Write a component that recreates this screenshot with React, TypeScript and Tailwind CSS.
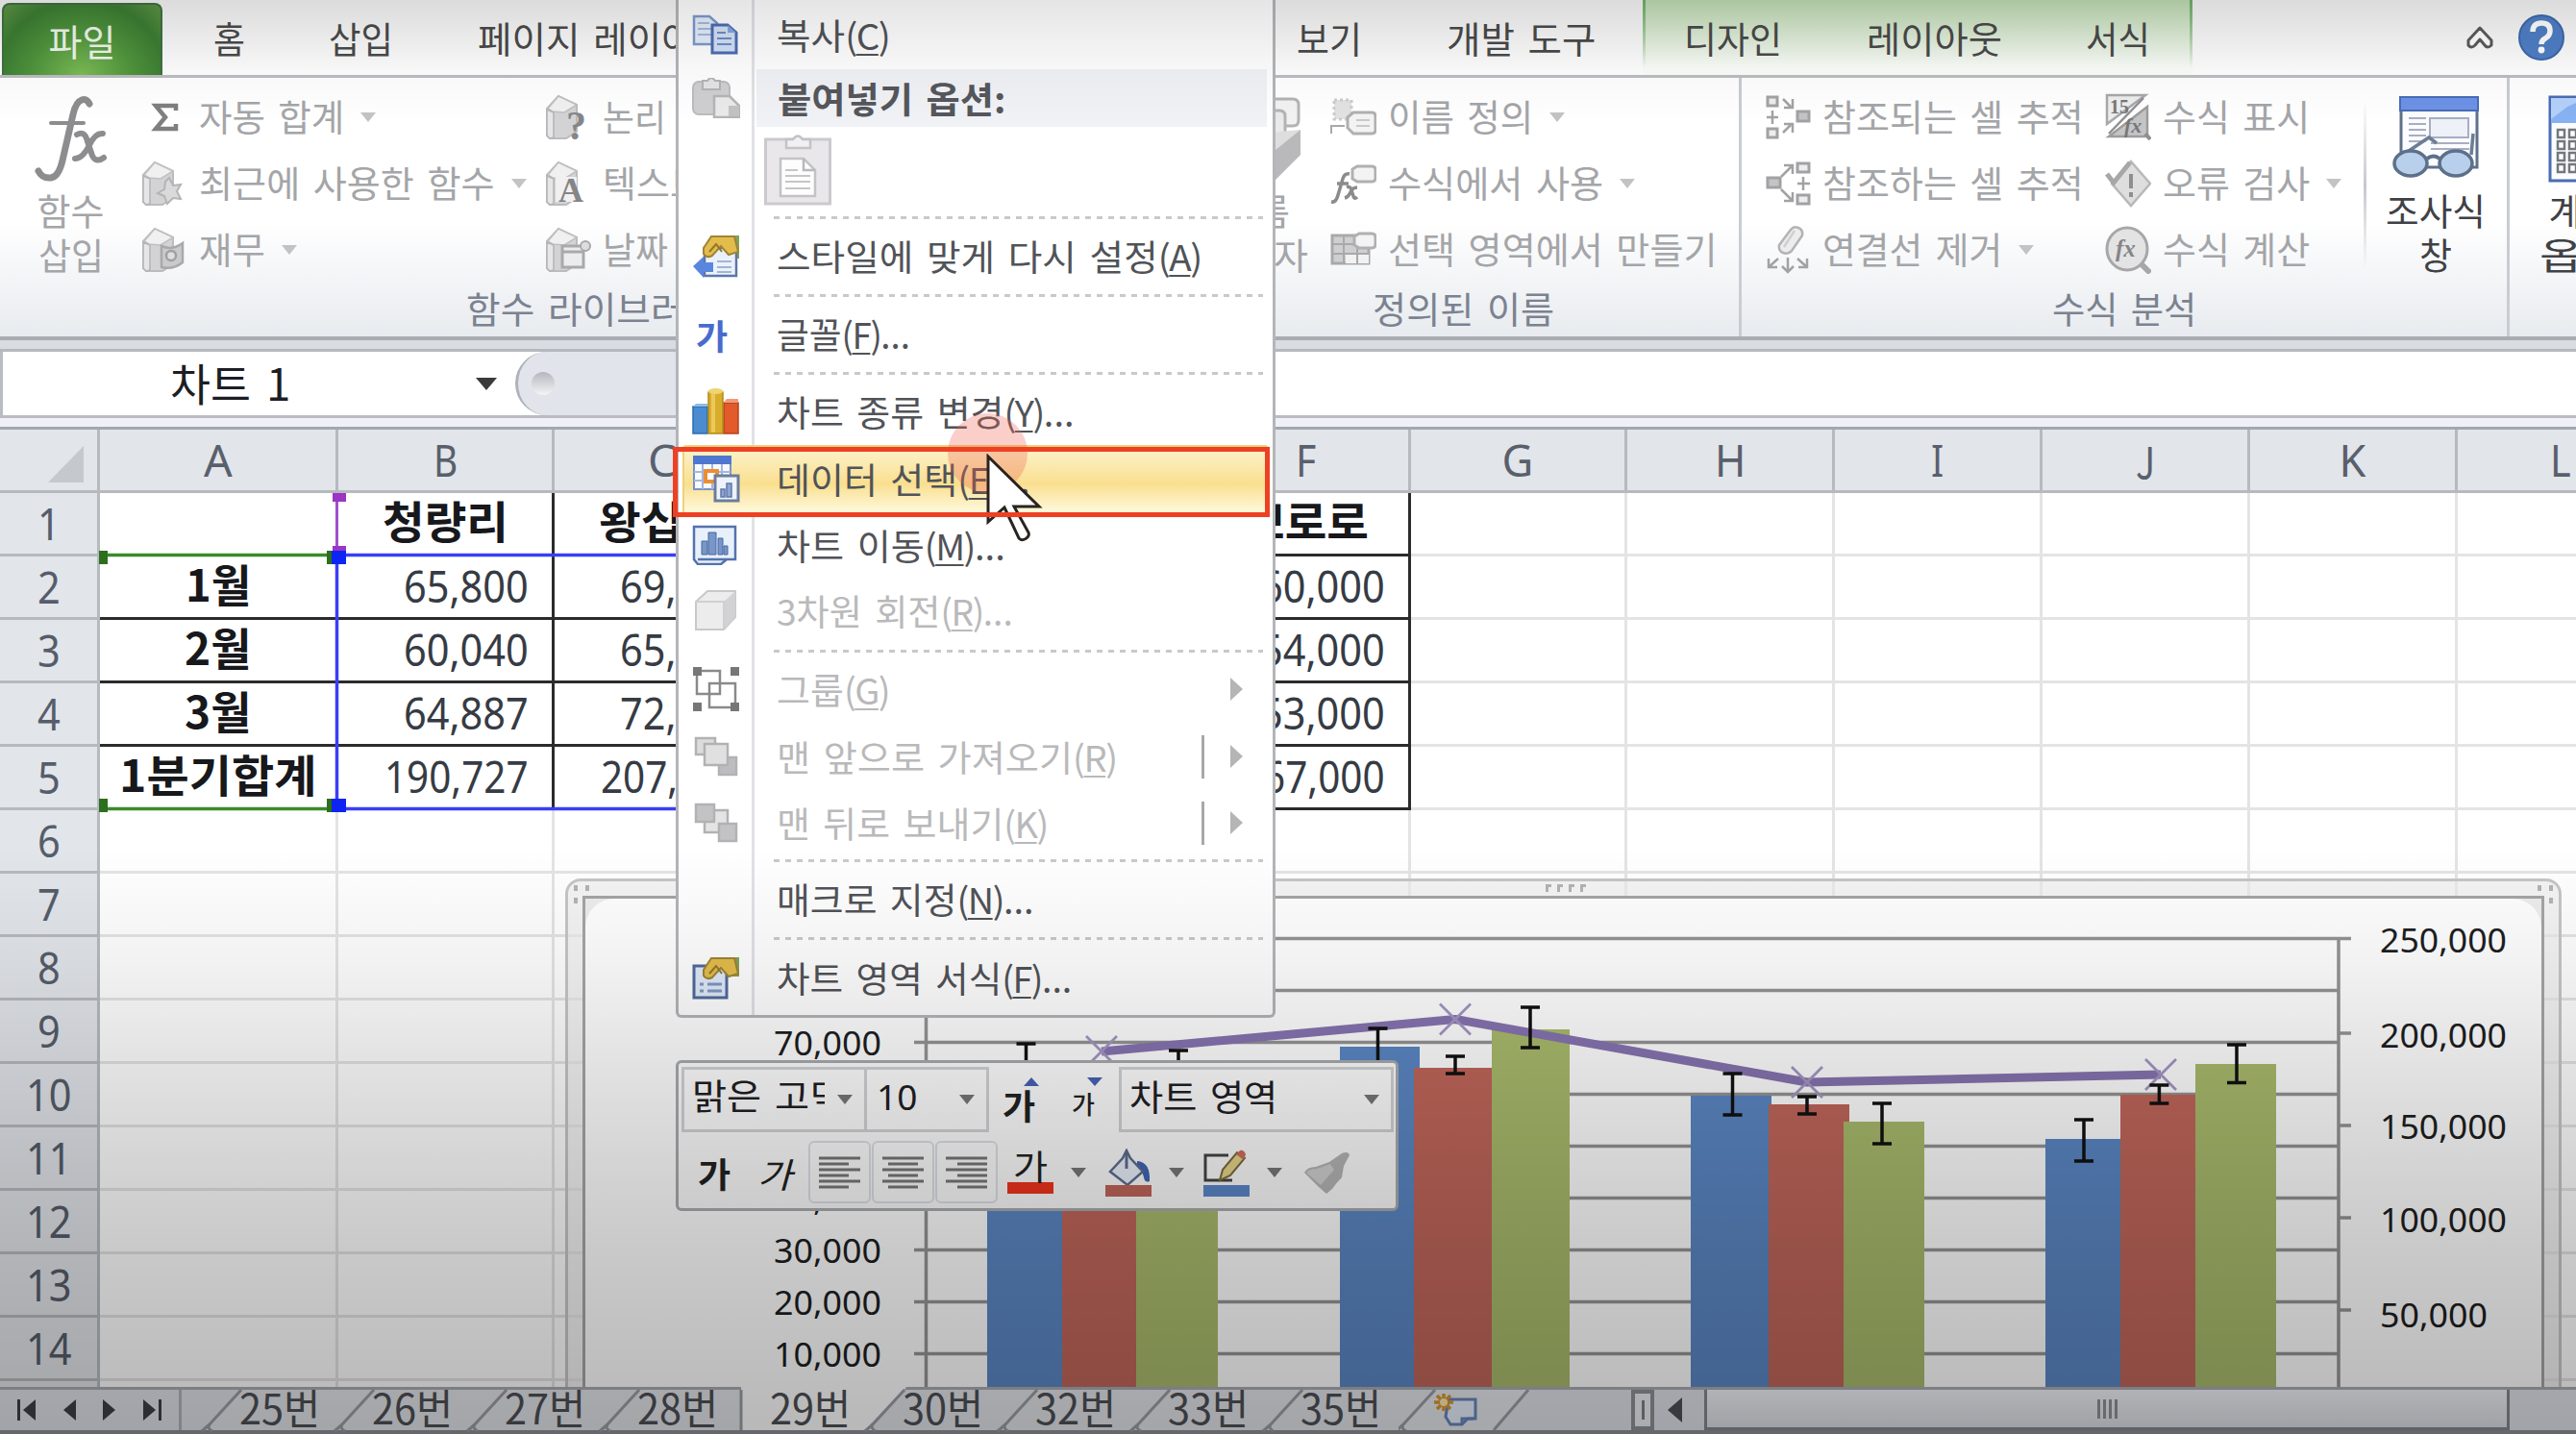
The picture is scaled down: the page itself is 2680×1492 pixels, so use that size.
import { useLayoutEffect, useRef, useState, type ReactNode } from "react";

const KR = "font-['Noto_Sans_CJK_KR',sans-serif]";
const LATIN = "font-['Noto_Sans','Noto_Sans_CJK_KR',sans-serif]";

/* Text squeezed or stretched horizontally so that it is exactly `w` pixels wide. */
function Fit({ w, className = "", children }: { w: number; className?: string; children: ReactNode }) {
  const ref = useRef<HTMLSpanElement>(null);
  const [scale, setScale] = useState(1);
  useLayoutEffect(() => {
    if (ref.current) setScale(w / ref.current.offsetWidth);
  }, [w]);
  return (
    <span className={`inline-block shrink-0 leading-none whitespace-nowrap [word-spacing:0.13em] ${className}`} style={{ width: w }}>
      <span ref={ref} className="inline-block origin-left" style={{ transform: `scaleX(${scale})` }}>
        {children}
      </span>
    </span>
  );
}

function Arrow({ className }: { className: string }) {
  return (
    <svg viewBox="0 0 16 10" className={`h-2.5 w-4 shrink-0 ${className}`}>
      <path d="M0 0h16l-8 10z" fill="currentColor" />
    </svg>
  );
}

/* ---------- ribbon icons ---------- */

function Book({ children }: { children?: ReactNode }) {
  return (
    <svg viewBox="0 0 48 48" className="h-12 w-12">
      <path d="M2 15 14 2l19 9v28l-11 7H5l-3-3z" fill="#d3d3d5" stroke="#bcbcbe" strokeWidth="2" />
      <path d="M3 15 14 2l19 9-13 8-12-1z" fill="#f0f0f0" stroke="#c0c0c2" strokeWidth="1.500" />
      <path d="M2 16l7 3v26l-4 1-3-3z" fill="#e6e6e7" stroke="#b4b4b6" strokeWidth="1.500" />
      {children}
    </svg>
  );
}

function TagIcon() {
  return (
    <svg viewBox="0 0 48 48" className="h-12 w-12">
      <path d="M4 6h18v20H4z" fill="#e2e2e3" />
      <path d="M4 6h18v20H4z" fill="none" stroke="#cdcdcf" strokeWidth="3" strokeDasharray="3 3" />
      <path d="M1 41v-8h14" fill="none" stroke="#a9a9ab" strokeWidth="2" />
      <path d="M24 19h19q4 0 4 4v14q0 4-4 4H24l-6-6V24z" fill="#f3f3f3" stroke="#b0b0b2" strokeWidth="3" />
      <path d="M27 27h14M27 33h14" stroke="#c9c9cb" strokeWidth="2" />
    </svg>
  );
}

function FxTagIcon() {
  return (
    <svg viewBox="0 0 48 48" className="h-12 w-12">
      <path d="M28 6h15q4 0 4 4v8q0 4-4 4H28l-5-3V9z" fill="#f3f3f3" stroke="#b0b0b2" strokeWidth="3" />
      <path d="M1 43q5 1 7-7l5-17q2-6 7-5M7 24h12M17 28q4-2 5 3l2 6q1 4 4 1M28 28q-5 0-7 5t-6 6" fill="none" stroke="#8b8b8d" strokeWidth="3.500" />
    </svg>
  );
}

function GridTagIcon() {
  return (
    <svg viewBox="0 0 48 48" className="h-12 w-12">
      <path d="M2 9h38v29H2z" fill="#cfcfd1" stroke="#a9a9ab" strokeWidth="3" />
      <path d="M16 28h24v10H16z" fill="#f2f2f2" />
      <path d="M2 18h38M2 28h38M14 9v29M28 9v29" stroke="#a9a9ab" strokeWidth="2" />
      <path d="M30 7h13q4 0 4 4v7q0 4-4 4H30l-5-3v-9z" fill="#f3f3f3" stroke="#b0b0b2" strokeWidth="3" />
    </svg>
  );
}

function PrecedentsIcon() {
  return (
    <svg viewBox="0 0 48 48" className="h-12 w-12" fill="none" stroke="#a2a2a4" strokeWidth="3">
      <path d="M3 3h10v9H3zM3 36h10v9H3z" fill="#ededee" />
      <path d="M34 18h12v10H34z" fill="#c4c4c6" />
      <path d="M8 17v14M2 24h12M19 5l8 8M20 14h9V5M19 40l8-8M20 31h9v9" strokeWidth="2.5" />
    </svg>
  );
}

function DependentsIcon() {
  return (
    <svg viewBox="0 0 48 48" className="h-12 w-12" fill="none" stroke="#a2a2a4" strokeWidth="3">
      <path d="M34 3h12v9H34zM34 36h12v9H34z" fill="#ededee" />
      <path d="M3 18h13v10H3z" fill="#c4c4c6" />
      <path d="M40 17v14M34 24h13M17 17 28 6M20 5h9v9M17 30l11 11M20 42h9v-9" strokeWidth="2.5" />
    </svg>
  );
}

function EraserIcon() {
  return (
    <svg viewBox="0 0 48 50" className="h-[50px] w-12" fill="none" stroke="#a2a2a4" strokeWidth="2.5">
      <path d="M27 4q3-4 8-2t4 8L28 26q-4 4-9 2t-4-8z" fill="#ececed" stroke="#b3b3b5" />
      <path d="M31 5l-11 17" stroke="#cfcfd1" />
      <path d="M14 34 4 43M4 34v9h9M24 33v14M18 42l6 6 6-6M34 34l10 9M44 34v9h-9" />
    </svg>
  );
}

function ShowFormulaIcon() {
  return (
    <svg viewBox="0 0 48 50" className="h-[50px] w-12">
      <path d="M2 2h40L2 32z" fill="#ededee" stroke="#a8a8aa" strokeWidth="2.5" />
      <path d="M44 14v31H4z" fill="#c4c4c6" stroke="#9c9c9e" strokeWidth="2.5" />
      <text x="5" y="21" fontSize="20" fontWeight="700" fontFamily="Liberation Serif" fill="#777">15</text>
      <text x="20" y="41" fontSize="22" fontStyle="italic" fontWeight="700" fontFamily="Liberation Serif" fill="#777">fx</text>
      <path d="M4 42 40 5" stroke="#8f8f91" strokeWidth="2.5" />
      <path d="M42 42l5 6" stroke="#8f8f91" strokeWidth="4" />
    </svg>
  );
}

function ErrorCheckIcon() {
  return (
    <svg viewBox="0 0 48 50" className="h-[50px] w-12">
      <path d="M27 2 47 25 27 48 7 25z" fill="#dededf" stroke="#b8b8ba" strokeWidth="2.5" />
      <path d="M27 15v15M27 34v5" stroke="#8e8e90" strokeWidth="4" />
      <path d="M2 15l7 9L26 3" fill="none" stroke="#a7a7a9" strokeWidth="5" />
    </svg>
  );
}

function EvaluateIcon() {
  return (
    <svg viewBox="0 0 48 50" className="h-[50px] w-12">
      <path d="M36 38l9 9" stroke="#a7a7a9" strokeWidth="6" strokeLinecap="round" />
      <ellipse cx="23" cy="24" rx="21" ry="22" fill="#e3e3e4" stroke="#a7a7a9" strokeWidth="3" />
      <text x="11" y="32" fontSize="25" fontStyle="italic" fontWeight="700" fontFamily="Liberation Serif" fill="#858587">fx</text>
    </svg>
  );
}

function WatchIcon() {
  return (
    <svg viewBox="0 0 90 88" className="h-[88px] w-[90px]">
      <path d="M9 3h79v72H9z" fill="#fbfcfe" stroke="#5f7089" strokeWidth="3" />
      <path d="M8 2h81v14H8z" fill="#6c92e6" stroke="#4a6cb8" strokeWidth="2" />
      <path d="M17 24h18M17 30h18M17 36h18M17 42h18M17 48h18M40 50h40M40 56h40" stroke="#a7aec4" strokeWidth="2" />
      <path d="M39 24h40v20H39z" fill="#eef1f8" stroke="#a7aec4" strokeWidth="2" />
      <path d="M14 60 38 44l8 6M82 62l2-22" fill="none" stroke="#6c7d94" strokeWidth="3.500" />
      <ellipse cx="19" cy="71" rx="17" ry="13" fill="#b9d0ec" stroke="#5d7089" strokeWidth="3.500" />
      <ellipse cx="66" cy="71" rx="17" ry="13" fill="#b9d0ec" stroke="#5d7089" strokeWidth="3.500" />
      <path d="M36 66q7-5 13 0" fill="none" stroke="#5d7089" strokeWidth="4" />
    </svg>
  );
}

function CalcIcon() {
  return (
    <svg viewBox="0 0 72 92" className="h-[92px] w-[72px]">
      <path d="M2 2h68v87H2z" fill="#fafcff" stroke="#4a6db3" strokeWidth="3" />
      <path d="M3 3h66v26H3z" fill="#86b2f3" />
      <path d="M3 25 20 12l20-9H3z" fill="#b4d0fa" />
      {[36, 48, 60, 72].map((y) => (
        <g key={y} fill="#fff" stroke="#75777c" strokeWidth="2.5">
          <rect x="10" y={y} width="7" height="8" />
          <rect x="22" y={y} width="7" height="8" />
          <rect x="34" y={y} width="7" height="8" />
          <rect x="46" y={y} width="7" height="8" />
        </g>
      ))}
    </svg>
  );
}

function NameManagerIcon() {
  return (
    <svg viewBox="0 0 96 88" className="h-[88px] w-24">
      <path d="M40 4h46q6 0 6 6v16q0 6-6 6H40z" fill="#f2f2f3" stroke="#b3b3b5" strokeWidth="3" />
      <path d="M20 16h52q6 0 6 6v20H20z" fill="#eaeaeb" stroke="#b3b3b5" strokeWidth="3" />
      <path d="M4 44l90-8v26L68 88H4z" fill="#dededf" />
      <path d="M62 62 94 36v26L68 88h-6z" fill="#b9b9bb" />
    </svg>
  );
}

function Command({ icon, label, w, arrow }: { icon: ReactNode; label: string; w: number; arrow?: boolean }) {
  return (
    <div className="flex h-[69px] items-center">
      <div className="flex w-[60px] shrink-0 items-center">{icon}</div>
      <Fit w={w} className="-mt-1 text-[38px] text-[#a4a5a8]">{label}</Fit>
      {arrow && <Arrow className="ml-[17px] text-[#c3c3c5]" />}
    </div>
  );
}

function BigButton({ icon, top, bottom, tw, bw, className }: { icon: ReactNode; top: string; bottom: string; tw: number; bw: number; className: string }) {
  return (
    <div className={`flex shrink-0 flex-col items-center pt-3.5 ${className}`}>
      <div className="flex h-[100px] items-start pt-1">{icon}</div>
      <div className="flex h-[46px] items-center"><Fit w={tw} className="text-[38px]">{top}</Fit></div>
      <div className="flex h-[46px] items-center"><Fit w={bw} className="text-[38px]">{bottom}</Fit></div>
    </div>
  );
}

function Group({ label, w, className, children }: { label: string; w: number; className: string; children: ReactNode }) {
  return (
    <div className={`flex h-full shrink-0 flex-col border-r-[3px] border-[#c9ccd1] ${className}`}>
      <div className="flex h-[213px]">{children}</div>
      <div className="flex h-[52px] items-center justify-center">
        <Fit w={w} className="text-[38px] text-[#7b8290]">{label}</Fit>
      </div>
    </div>
  );
}

function Ribbon() {
  return (
    <div className="flex h-[273px] shrink-0 border-b-4 border-[#a9adb3] bg-linear-to-b from-white from-55% to-[#e8ebef]">
      <Group label="함수 라이브러리" w={263} className="w-[1236px]">
        <BigButton
          className="w-[147px] text-[#a4a5a8]"
          icon={
            <svg viewBox="0 0 76 90" className="h-[90px] w-[76px]" fill="none" stroke="#8d8d8f" strokeLinecap="round">
              <path d="M57 9q-3-6-8-4-6 2-9 15L29 68q-4 17-12 18-9 1-13-7" strokeWidth="7" />
              <path d="M17 29h34" strokeWidth="4" />
              <path d="M44 41q7-4 10 4l6 18q4 8 12 2M71 40q-8-1-14 12-7 14-15 14" strokeWidth="6" />
            </svg>
          }
          top="함수" bottom="삽입" tw={70} bw={68}
        />
        <div className="w-[420px] pt-1.5">
          <Command
            icon={<svg viewBox="0 0 48 48" className="h-12 w-12"><path d="M36 17v-5H15l10 12-10 12h21v-5" fill="none" stroke="#7f7f82" strokeWidth="4.500" /></svg>}
            label="자동 합계" w={151} arrow
          />
          <Command
            icon={<Book><path d="M29 18l4 8 8-1-4 7 4 8-8-1-6 6-3-8-7-3 7-4 1-8z" fill="#dadadb" stroke="#b4b4b6" strokeWidth="2" /></Book>}
            label="최근에 사용한 함수" w={308} arrow
          />
          <Command
            icon={<Book><path d="M21 20q11 5 22-3v20q-10 8-22 5z" fill="#cacacc" stroke="#a9a9ab" strokeWidth="2.5" /><circle cx="31" cy="30" r="5" fill="#dedede" stroke="#a0a0a2" strokeWidth="2.5" /></Book>}
            label="재무" w={69} arrow
          />
        </div>
        <div className="w-[400px] pt-1.5">
          <Command
            icon={<Book><text x="22" y="47" fontSize="42" fontWeight="700" fontFamily="Liberation Serif" fill="#858587">?</text></Book>}
            label="논리" w={66}
          />
          <Command
            icon={<Book><path d="M11 17h22v26H11z" fill="#f0f0f0" /><text x="14" y="43" fontSize="36" fontWeight="700" fontFamily="Liberation Serif" fill="#858587">A</text></Book>}
            label="텍스트" w={105}
          />
          <Command
            icon={<Book><path d="M18 20h22v22H18z" fill="#ececed" stroke="#a9a9ab" strokeWidth="3" /><path d="M18 26h22" stroke="#a9a9ab" strokeWidth="3" /><circle cx="42" cy="20" r="5" fill="#ddd" stroke="#a9a9ab" strokeWidth="2" /></Book>}
            label="날짜" w={68}
          />
        </div>
      </Group>
      <Group label="정의된 이름" w={189} className="w-[576px]">
        <BigButton className="w-[148px] pr-1.5 text-[#a4a5a8]" icon={<NameManagerIcon />} top="이름" bottom="관리자" tw={70} bw={108} />
        <div className="pt-1.5">
          <Command icon={<TagIcon />} label="이름 정의" w={151} arrow />
          <Command icon={<FxTagIcon />} label="수식에서 사용" w={224} arrow />
          <Command icon={<GridTagIcon />} label="선택 영역에서 만들기" w={343} />
        </div>
      </Group>
      <Group label="수식 분석" w={150} className="w-[799px]">
        <div className="ml-6 w-[354px] pt-1.5">
          <Command icon={<PrecedentsIcon />} label="참조되는 셀 추적" w={272} />
          <Command icon={<DependentsIcon />} label="참조하는 셀 추적" w={272} />
          <Command icon={<EraserIcon />} label="연결선 제거" w={187} arrow />
        </div>
        <div className="w-[269px] pt-1.5">
          <Command icon={<ShowFormulaIcon />} label="수식 표시" w={153} />
          <Command icon={<ErrorCheckIcon />} label="오류 검사" w={153} arrow />
          <Command icon={<EvaluateIcon />} label="수식 계산" w={153} />
        </div>
        <div className="mt-6 h-[176px] w-[3px] bg-linear-to-b from-transparent via-[#c6c8cc] to-transparent" />
        <BigButton className="w-[144px] text-[#3f4146]" icon={<WatchIcon />} top="조사식" bottom="창" tw={104} bw={34} />
      </Group>
      <div className="w-[69px] overflow-hidden">
        <BigButton className="w-[151px] text-[#3f4146]" icon={<CalcIcon />} top="계산" bottom="옵션" tw={70} bw={90} />
      </div>
    </div>
  );
}

/* ---------- tab strip ---------- */

function TabStrip() {
  const t = "text-[38px] text-[#4a4a4a]";
  return (
    <div className="flex h-[81px] shrink-0 items-stretch border-b-[3px] border-[#bcbdc0] bg-linear-to-b from-[#f4f4f4] to-white">
      <div className="mt-[3px] ml-0.5 flex w-[167px] items-center justify-center rounded-t-lg border-2 border-b-0 border-[#3f7040] bg-[radial-gradient(ellipse_at_bottom,#7cbb55_0%,#4f943c_45%,#3c7d33_75%,#5f9647_100%)]">
        <Fit w={70} className="text-[38px] text-[#f0f7ec]">파일</Fit>
      </div>
      <div className="flex w-[1540px] items-center overflow-hidden">
        <Fit w={33} className={`ml-[53px] ${t}`}>홈</Fit>
        <Fit w={67} className={`ml-[87px] ${t}`}>삽입</Fit>
        <Fit w={262} className={`ml-[88px] ${t}`}>페이지 레이아웃</Fit>
        <Fit w={68} className={`ml-[590px] ${t}`}>보기</Fit>
        <Fit w={155} className={`ml-[88px] ${t}`}>개발 도구</Fit>
      </div>
      <div className="flex w-[572px] items-center border-x-[3px] border-[#8fbd88] bg-linear-to-b from-[#bfdcb2] to-[#fbfdfa] to-90% [border-image:linear-gradient(#6fae68,#ffffff00_90%)_1]">
        <Fit w={102} className={`ml-10 ${t}`}>디자인</Fit>
        <Fit w={141} className={`ml-[88px] ${t}`}>레이아웃</Fit>
        <Fit w={67} className={`ml-[87px] ${t}`}>서식</Fit>
      </div>
      <div className="flex flex-1 items-center justify-end gap-[26px] pr-3">
        <svg viewBox="0 0 28 24" className="h-6 w-7" fill="#fff" stroke="#5b5b5b" strokeWidth="3" strokeLinejoin="round">
          <path d="M14 2l12 13v5q-4 4-7 0l-5-6-5 6q-4 4-7 0v-5z" />
        </svg>
        <svg viewBox="0 0 48 48" className="h-12 w-12">
          <circle cx="24" cy="24" r="23" fill="#4f7fc6" stroke="#3d68ab" strokeWidth="2" />
          <path d="M15 18q0-9 9-9t9 8q0 5-5 8-4 2-4 6" fill="none" stroke="#fff" strokeWidth="5.500" />
          <circle cx="24" cy="37" r="3.4" fill="#fff" />
        </svg>
      </div>
    </div>
  );
}

/* ---------- formula bar ---------- */

function FormulaBar() {
  return (
    <>
      <div className="h-3 shrink-0 border-b-[3px] border-[#b5b9bf] bg-[#d9dce1]" />
      <div className="flex h-[69px] shrink-0 border-b-[3px] border-[#b9bcc3] bg-white">
        <div className="flex w-[536px] items-center border-l-[3px] border-[#b9bcc3]">
          <Fit w={125} className="-mt-1 ml-[174px] text-[46px] text-[#1c1e24]">차트 1</Fit>
          <svg viewBox="0 0 22 13" className="ml-[193px] h-[13px] w-[22px]"><path d="M0 0h22L11 13z" fill="#3a3a3a" /></svg>
        </div>
        <div className="flex w-[300px] items-center rounded-l-full border-l-[3px] border-[#aeb2b9] bg-[#e1e4ea] pl-3.5">
          <div className="h-6 w-6 rounded-full bg-linear-to-b from-[#b4b7bd] to-[#f4f5f7]" />
        </div>
      </div>
      <div className="h-3 shrink-0 border-b-[3px] border-[#a3a7ae] bg-[#eff0f8]" />
    </>
  );
}

/* ---------- worksheet ---------- */

const COLS = [
  { n: "A", w: "w-[248px]", g: 30 },
  { n: "B", w: "w-[225px]", g: 25 },
  { n: "C", w: "w-[225px]", g: 29 },
  { n: "D", w: "w-[225px]", g: 30 },
  { n: "E", w: "w-[225px]", g: 22 },
  { n: "F", w: "w-[216px]", g: 21 },
  { n: "G", w: "w-[225px]", g: 33 },
  { n: "H", w: "w-[216px]", g: 32 },
  { n: "I", w: "w-[216px]", g: 13 },
  { n: "J", w: "w-[216px]", g: 20 },
  { n: "K", w: "w-[216px]", g: 28 },
  { n: "L", w: "w-[216px]", g: 22 },
];

const DATA = [
  ["", "청량리", "왕십리", "", "", "뽀로로"],
  ["1월", "65,800", "69,500", "", "", "60,000"],
  ["2월", "60,040", "65,400", "", "", "54,000"],
  ["3월", "64,887", "72,300", "", "", "53,000"],
  ["1분기합계", "190,727", "207,200", "", "", "167,000"],
];
const ROW_HEAD_W = [0, 68, 69, 69, 205];

function Cell({ r, c }: { r: number; c: number }) {
  const inTable = r < 5 && c < 6;
  const text = inTable ? DATA[r][c] : "";
  const right = inTable && c > 0 ? "border-r-[#2b2b2b]" : "border-r-[#e4e4e4]";
  const bottom = inTable ? "border-b-[#2b2b2b]" : "border-b-[#e4e4e4]";
  const isHead = r === 0 || c === 0;
  return (
    <div className={`flex shrink-0 items-center border-r-[3px] border-b-[3px] ${COLS[c].w} ${right} ${bottom} ${isHead ? "justify-center" : "justify-end pr-6"}`}>
      {text !== "" &&
        (isHead ? (
          <Fit w={c === 0 ? ROW_HEAD_W[r] : 131} className={`-mt-2.5 text-[46px] font-bold text-[#17181c] ${KR}`}>{text}</Fit>
        ) : (
          <Fit w={text.length === 7 ? 150 : 130} className={`-mt-0.5 text-[45px] text-[#363b44] ${LATIN}`}>{text}</Fit>
        ))}
    </div>
  );
}

function Sheet() {
  return (
    <div className="relative flex h-[996px] shrink-0 flex-col overflow-hidden bg-white">
      <div className="flex h-[66px] shrink-0">
        <div className="flex w-[104px] shrink-0 items-end justify-end border-r-[3px] border-b-[3px] border-[#b6babf] bg-[#e2e5ea] pr-3.5 pb-2">
          <svg viewBox="0 0 37 38" className="h-[38px] w-[37px]"><path d="M37 0v38H0z" fill="#c5c9ce" /></svg>
        </div>
        {COLS.map((c) => (
          <div key={c.n} className={`flex shrink-0 items-center justify-center border-r-[3px] border-b-[3px] border-[#b6babf] bg-[#e2e5ea] ${c.w}`}>
            <Fit w={c.g} className={`text-[45px] text-[#59606c] ${c.n === "J" ? KR : LATIN}`}>{c.n}</Fit>
          </div>
        ))}
      </div>
      {Array.from({ length: 15 }, (_, r) => (
        <div key={r} className="flex h-[66px] shrink-0">
          <div className="flex w-[104px] shrink-0 items-center justify-center border-r-[3px] border-b-[3px] border-[#b6babf] bg-[#e2e5ea]">
            {r < 14 && <Fit w={r < 9 ? 24 : 47} className={`text-[45px] text-[#565d6a] ${LATIN}`}>{r + 1}</Fit>}
          </div>
          {COLS.map((c, i) => <Cell key={c.n} r={r} c={i} />)}
        </div>
      ))}
      <RangeMarks />
      <ChartObject />
    </div>
  );
}

/* Coloured outlines of the ranges that feed the chart. */
function RangeMarks() {
  return (
    <svg viewBox="0 0 1300 480" className="absolute top-0 left-0 h-[480px] w-[1300px]">
      <path d="M350.5 66v64" stroke="#a04fd0" strokeWidth="3" />
      <path d="M346 66h14v9h-14zM346 121h14v9h-14z" fill="#9a35c4" />
      <path d="M104 130.500h246M104 394.500h246" stroke="#3c8a2c" strokeWidth="3.500" />
      <path d="M103 126h9v14h-9zM340 126h10v14h-10zM103 384h9v14h-9zM340 384h10v14h-10z" fill="#2c6f1c" />
      <path d="M350.500 130.500h900v264h-900z" fill="none" stroke="#3a3df5" strokeWidth="3.500" />
      <path d="M345 126h15v14h-15zM345 384h15v14h-15z" fill="#0d24f2" />
    </svg>
  );
}

/* ---------- chart ---------- */

const BARS = [
  { x: 1027, w: 78, y: 1107, e: [1067.5, 1086, 1130] },
  { x: 1105, w: 77, y: 1138, e: [1146, 1129, 1148] },
  { x: 1182, w: 85, y: 1112, e: [1226, 1093, 1133] },
  { x: 1394, w: 83, y: 1089, e: [1433.5, 1070, 1110] },
  { x: 1471, w: 82, y: 1111, e: [1514, 1099, 1117] },
  { x: 1552, w: 81, y: 1071, e: [1592, 1048, 1090] },
  { x: 1759, w: 84, y: 1140, e: [1802.5, 1117, 1160] },
  { x: 1840, w: 84, y: 1149, e: [1880, 1141, 1159] },
  { x: 1918, w: 84, y: 1167, e: [1958, 1148, 1190] },
  { x: 2128, w: 78, y: 1185, e: [2168, 1165, 1208] },
  { x: 2206, w: 78, y: 1139, e: [2246.4, 1129, 1148] },
  { x: 2284, w: 84, y: 1107, e: [2327, 1087, 1126.5] },
];
const LINE: [number, number][] = [[1146, 1094], [1514, 1060.5], [1880, 1126], [2248, 1118]];
const FILLS = ["#5b87c4", "#c0665a", "#a9bb6c"];
const LEFT_AXIS: [string, number][] = [["70,000", 1098], ["40,000", 1260], ["30,000", 1314], ["20,000", 1368], ["10,000", 1422]];
const RIGHT_AXIS: [string, number][] = [["250,000", 991], ["200,000", 1089.5], ["150,000", 1185], ["100,000", 1282], ["50,000", 1381]];

function ChartObject() {
  const ys = Array.from({ length: 9 }, (_, i) => 976.5 + i * 54);
  return (
    <div className="absolute top-[467px] left-[588px] h-[620px] w-[2077px] rounded-2xl border-[3px] border-[#c6c6c6] bg-[#ececec]/60 p-[15px]">
      <div className="h-full w-full border-[3px] border-[#a5a5a5] bg-[#ededed]">
        <div className="h-full w-full rounded-[30px] bg-white" />
      </div>
      <svg viewBox="588 914 2077 620" className="absolute -top-[3px] -left-[3px] h-[620px] w-[2077px]">
        <g stroke="#949494" strokeWidth="3.500" fill="none">
          {ys.map((y) => <path key={y} d={`M951 ${y}H2433`} />)}
          <path d="M963.500 976v500M2433 975v500" />
          {[976.5, 1075, 1171, 1267, 1363].map((y) => <path key={y} d={`M2433 ${y}h13`} />)}
        </g>
        {BARS.map((b, i) => <rect key={b.x} x={b.x} y={b.y} width={b.w} height={400} fill={FILLS[i % 3]} />)}
        <path d={"M" + LINE.map((p) => p.join(" ")).join("L")} fill="none" stroke="#8774b1" strokeWidth="9" strokeLinejoin="round" />
        {LINE.map(([x, y]) => (
          <path key={x} d={`M${x - 16} ${y - 16}l32 32m0-32l-32 32`} stroke="#a596c4" strokeWidth="2.800" />
        ))}
        <g stroke="#111" strokeWidth="3.500" fill="none">
          {BARS.map(({ e: [x, a, b] }) => <path key={x} d={`M${x - 10} ${a}h20M${x} ${a}V${b}M${x - 10} ${b}h20`} />)}
        </g>
        <g fontFamily="Noto Sans" fontSize="34" fill="#1d1e22">
          {LEFT_AXIS.map(([t, y]) => <text key={t} x="805" y={y} textLength="112" lengthAdjust="spacingAndGlyphs">{t}</text>)}
          {RIGHT_AXIS.map(([t, y]) => <text key={t} x="2476" y={y} textLength={t.length === 7 ? 132 : 112} lengthAdjust="spacingAndGlyphs">{t}</text>)}
        </g>
        <g fill="#b3b3b3">
          {[1608, 1620, 1632, 1644].map((x) => <path key={x} d={`M${x} 920h6v3h-3v5h-3z`} />)}
          <path d="M597 921h4v6h-4zM609 921h4v6h-4zM597 934h4v6h-4zM2640 921h4v6h-4zM2652 921h4v6h-4zM2652 934h4v6h-4z" />
        </g>
      </svg>
    </div>
  );
}

/* ---------- sheet tabs ---------- */

function SheetTabs() {
  const names = ["25번", "26번", "27번", "28번", "29번", "30번", "32번", "33번", "35번"];
  return (
    <div className="flex h-[49px] shrink-0 border-t-[3px] border-b-4 border-t-[#a8abb2] border-b-[#8b8e94] bg-[#dfe2ea]">
      <div className="flex w-[189px] items-center gap-7 border-r-[3px] border-[#b0b3ba] pl-[18px] text-[#3c3f45]">
        <svg viewBox="0 0 20 22" className="h-[22px] w-5" fill="currentColor"><path d="M0 0h3v22H0zM19 0v22L6 11z" /></svg>
        <svg viewBox="0 0 13 22" className="h-[22px] w-[13px]" fill="currentColor"><path d="M13 0v22L0 11z" /></svg>
        <svg viewBox="0 0 13 22" className="h-[22px] w-[13px]" fill="currentColor"><path d="M0 0v22l13-11z" /></svg>
        <svg viewBox="0 0 20 22" className="h-[22px] w-5" fill="currentColor"><path d="M17 0h3v22h-3zM1 0v22l13-11z" /></svg>
      </div>
      <div className="flex w-[1508px] pl-6">
        {names.map((n) => (
          <div key={n} className="relative w-[138px] shrink-0">
            <svg viewBox="0 0 184 42" className="absolute top-0 left-0 h-[42px] w-[184px] overflow-visible" fill="none">
              {n === "29번" ? (
                <>
                  <path d="M6 -3H178L146 42H6z" fill="#fff" />
                  <path d="M6 0v42" stroke="#9a9da4" strokeWidth="3" />
                </>
              ) : (
                <>
                  <path d="M37 0h140l-30 42H6q-6-6-2-8z" fill="#e3e5ea" />
                  <path d="M38 0 5 36q-3 4 3 7M5 36l-8 7" stroke="#9a9da4" strokeWidth="3" />
                </>
              )}
            </svg>
            <Fit w={84} className="relative -mt-1 ml-9 text-[43px] text-[#4d4f54]">{n}</Fit>
          </div>
        ))}
        <div className="relative w-[138px]">
          <svg viewBox="0 0 140 42" className="absolute top-0 left-0 h-[42px] w-[140px]" fill="none">
            <path d="M37 0h98l-36 42H6q-6-6-2-8z" fill="#e6e8ec" />
            <path d="M38 0 5 36q-3 4 3 7M5 36l-8 7M135 0l-36 42" stroke="#9a9da4" strokeWidth="3" />
            <path d="M52 10h28v20h-8l-6 6H54l-5-8z" fill="#e6eefb" stroke="#6785bd" strokeWidth="3" />
            <path d="M66 36v-6h12" stroke="#6785bd" strokeWidth="3" />
            <path d="M47 4v18M37 13h20M40 6l14 14M54 6 40 20" stroke="#d9962e" strokeWidth="3.500" />
            <circle cx="47" cy="13" r="4" fill="#ffe9ae" />
          </svg>
        </div>
      </div>
      <div className="flex w-6 items-center justify-center border-4 border-[#8d9096] bg-[#eceef2]"><div className="h-5 w-[3px] bg-[#7d8086]" /></div>
      <div className="flex w-[52px] items-center pl-3.5">
        <svg viewBox="0 0 15 26" className="h-[26px] w-[15px]"><path d="M15 0v26L0 13z" fill="#4c4f55" /></svg>
      </div>
      <div className="flex w-[838px] items-center justify-center gap-[3px] border-x-[3px] border-b-[3px] border-[#83868c] bg-linear-to-b from-[#f0f3f7] to-[#dcdfe6]">
        {[0, 1, 2, 3].map((i) => <div key={i} className="h-5 w-[3px] bg-[#8d9096]" />)}
      </div>
    </div>
  );
}

/* ---------- context menu ---------- */

const CopyIcon = (
  <svg viewBox="0 0 48 42" className="h-[42px] w-12">
    <path d="M2 2h16l8 7v22H2z" fill="#e4edfa" stroke="#7d9acb" strokeWidth="2.500" />
    <path d="M6 9h12M6 15h14M6 21h14" stroke="#a5b9dc" strokeWidth="2" />
    <path d="M21 11h16l9 8v21H21z" fill="#d3e1f6" stroke="#4a6db3" strokeWidth="3" />
    <path d="M26 19h9M26 25h15M26 31h15" stroke="#6f8cc8" strokeWidth="2" />
    <path d="M37 11v8h9z" fill="#86a5dc" />
  </svg>
);
const PasteGray = (
  <svg viewBox="0 0 50 42" className="h-[42px] w-[50px]">
    <rect x="1" y="4" width="38" height="34" rx="6" fill="#cfcfd1" stroke="#bcbcbe" strokeWidth="2" />
    <path d="M11 3h5q4-6 8 0h5v9H11z" fill="#e4e4e5" stroke="#b4b4b6" strokeWidth="2" />
    <path d="M23 19h16l10 10v12H23z" fill="#eaeaeb" stroke="#b5b5b7" strokeWidth="2.500" />
    <path d="M38 29h11v11H38z" fill="#c2c2c4" />
  </svg>
);
const Hand = (
  <path d="M12 14 20 2h24l4 16-10 3-8-9-9 10q-6 3-9-2z" fill="#e3bd4c" stroke="#a08434" strokeWidth="2" />
);
const ResetIcon = (
  <svg viewBox="0 0 50 46" className="h-[46px] w-[50px]">
    <path d="M36 1h13v24H36z" fill="#7fa25a" />
    <path d="M13 14h33v29H13z" fill="#eaf1fb" stroke="#5c77a8" strokeWidth="2.500" />
    <path d="M26 28h15M26 34h15M26 39h15" stroke="#a4b4d2" strokeWidth="2" />
    {Hand}
    <path d="M18 18l7-8 6 8" fill="none" stroke="#937728" strokeWidth="2" />
    <path d="M1 33 12 23v6h10v10H12v6z" fill="#5b86dd" />
  </svg>
);
const FontIcon = <span className={`ml-1 text-[36px] leading-none font-bold text-[#4a6bce] ${KR}`}>가</span>;
const ColumnsIcon = (
  <svg viewBox="0 0 50 50" className="h-[50px] w-[50px]">
    <path d="M1 20h15v28H1z" fill="#4a8ccf" stroke="#2d6bb0" strokeWidth="1.500" />
    <path d="M1 20l3-3h12v3z" fill="#8dbbe8" />
    <path d="M33 16h15v32H33z" fill="#e35a2b" stroke="#b5431b" strokeWidth="1.500" />
    <path d="M33 16l3-4h12v4z" fill="#f29a75" />
    <path d="M17 5h15v43H17z" fill="#d9ad2c" stroke="#b28915" strokeWidth="1.500" />
    <path d="M20 6h4v41h-4z" fill="#ecc95c" />
    <ellipse cx="24.500" cy="4" rx="8" ry="3" fill="#f0d472" />
  </svg>
);
const SelectDataIcon = (
  <svg viewBox="0 0 50 50" className="h-[50px] w-[50px]">
    <path d="M2 2h38v34H2z" fill="#f7faff" stroke="#7792cc" strokeWidth="2" />
    <path d="M1 1h40v9H1z" fill="#5077cf" />
    <path d="M2 18h38M2 27h38M11 10v26M21 10v26M31 10v26" stroke="#a3b6e0" strokeWidth="2" />
    <path d="M14 17h12v11H14z" fill="#fff" stroke="#eb8f34" strokeWidth="4" />
    <path d="M24 22h24v26H24z" fill="#eef3fb" stroke="#6c7d9c" strokeWidth="3" />
    <path d="M30 44V36h4v8zM36 44V30h5v14z" fill="#8fa5cf" stroke="#5f79ab" strokeWidth="1.500" />
  </svg>
);
const MoveChartIcon = (
  <svg viewBox="0 0 48 42" className="h-[42px] w-12">
    <path d="M2 2h43v34H36l-6 5H6l-4-5z" fill="#e8f0fb" stroke="#5373ad" strokeWidth="2.500" />
    <path d="M10 31V17h6v14zM17 31V8h8v23zM27 31V14h5v17zM33 31v-9h4v9z" fill="#7896c9" stroke="#49689f" strokeWidth="1" />
    <path d="M6 36h30" stroke="#5373ad" strokeWidth="2.500" />
  </svg>
);
const CubeIcon = (
  <svg viewBox="0 0 48 44" className="h-[44px] w-12">
    <path d="M4 13 16 2h29v27L33 42H4z" fill="#ececed" stroke="#c8c8ca" strokeWidth="2" />
    <path d="M33 13 45 2v27L33 42z" fill="#d2d2d4" />
    <path d="M4 13h29v29" fill="none" stroke="#d0d0d2" strokeWidth="2" />
  </svg>
);
const GroupIcon = (
  <svg viewBox="0 0 50 48" className="h-12 w-[50px]" fill="none" stroke="#8a8a8a" strokeWidth="2.500">
    <path d="M5 5h24v24H5zM18 18h27v25H18z" />
    <path d="M1 1h9v9H1zM40 1h9v9h-9zM1 38h9v9H1zM40 38h9v9h-9z" fill="#777" stroke="none" />
  </svg>
);
const FrontIcon = (
  <svg viewBox="0 0 48 42" className="h-[42px] w-12" fill="#dcdcdd" stroke="#b2b2b4" strokeWidth="2.500">
    <path d="M4 2h20v17H4z" />
    <path d="M28 22h18v18H28z" fill="#bdbdbf" />
    <path d="M13 8h24v22H13z" fill="#e0e0e1" />
  </svg>
);
const BackIcon = (
  <svg viewBox="0 0 48 42" className="h-[42px] w-12" fill="#dcdcdd" stroke="#b2b2b4" strokeWidth="2.500">
    <path d="M13 8h24v23H13z" fill="#e4e4e5" />
    <path d="M4 2h19v18H4zM28 22h18v18H28z" fill="#c3c3c5" />
  </svg>
);
const FormatIcon = (
  <svg viewBox="0 0 50 46" className="h-[46px] w-[50px]">
    <path d="M38 1h11v20H38z" fill="#7fa25a" />
    <path d="M2 10h34v33H2z" fill="#dfe9f8" stroke="#4f6a9c" strokeWidth="3" />
    <path d="M8 29h4M8 36h4M16 29h15M16 36h15" stroke="#7f97c4" strokeWidth="3" />
    {Hand}
    <path d="M18 18l7-8 6 8" fill="none" stroke="#937728" strokeWidth="2" />
  </svg>
);

type Item = { icon?: ReactNode; text: string; mnemonic: string; more?: boolean; w: number; h: string; off?: boolean; sub?: boolean; split?: boolean };

function MenuItem({ icon, text, mnemonic, more, w, h, off, sub, split }: Item) {
  return (
    <div className={`flex shrink-0 items-center ${h}`}>
      <div className="flex w-[77px] items-center pl-3.5">{icon}</div>
      <Fit w={w} className={`ml-[25px] text-[37px] ${off ? "text-[#b9b9bb]" : "text-[#515358]"}`}>
        {text}
        <span className="tracking-[-0.04em]">(<span className="underline decoration-2 underline-offset-4">{mnemonic}</span>)</span>
        {more && "..."}
      </Fit>
      <div className="ml-auto flex items-center pr-[31px]">
        {split && <div className="mr-[27px] h-[45px] w-[3px] bg-[#a8a8a8]" />}
        {sub && <svg viewBox="0 0 13 24" className="h-6 w-[13px]"><path d="M0 0v24l13-12z" fill="#b5b5b7" /></svg>}
      </div>
    </div>
  );
}

function Dots() {
  return (
    <div className="flex h-2 shrink-0 items-center pr-2.5 pl-[99px]">
      <div className="h-[3px] w-full bg-[repeating-linear-gradient(90deg,#c9c9cb_0_6px,transparent_6px_12px)]" />
    </div>
  );
}

function ContextMenu() {
  return (
    <div className="absolute top-0 left-[703px] flex h-[1059px] w-[624px] flex-col rounded-b-md border-[3px] border-t-0 border-[#b3b5b9] bg-[linear-gradient(90deg,#fff_0_76px,#e0e2e6_76px_79px,#fff_79px)]">
      <MenuItem icon={CopyIcon} text="복사" mnemonic="C" w={117} h="h-[72px]" />
      <div className="flex h-[60px] shrink-0 items-center">
        <div className="flex w-[81px] items-center pl-3.5">{PasteGray}</div>
        <div className="flex h-[60px] w-[531px] items-center bg-[#f1f2f6] pl-[22px]">
          <Fit w={237} className="text-[37px] font-bold text-[#55575c]">붙여넣기 옵션:</Fit>
        </div>
      </div>
      <div className="h-[90px] shrink-0 pt-2 pl-[89px]">
        <svg viewBox="0 0 70 74" className="h-[74px] w-[70px]">
          <path d="M1.500 5h67v67h-67z" fill="#e9e7ea" stroke="#cbc9cc" strokeWidth="3" />
          <path d="M23 5h7q5-7 10 0h8v9H23z" fill="#f1f0f2" stroke="#c3c2c5" strokeWidth="2.500" />
          <path d="M17 25h24l12 12v27H17z" fill="#fdfdfd" stroke="#c3c2c5" strokeWidth="2.500" />
          <path d="M41 25v12h12" fill="none" stroke="#b9b8bb" strokeWidth="2.500" />
          <path d="M22 37h13M22 43h26M22 49h26M22 56h26" stroke="#c6c5c8" strokeWidth="2" />
        </svg>
      </div>
      <Dots />
      <MenuItem icon={ResetIcon} text="스타일에 맞게 다시 설정" mnemonic="A" w={442} h="h-[73px]" />
      <Dots />
      <MenuItem icon={FontIcon} text="글꼴" mnemonic="F" more w={139} h="h-[73px]" />
      <Dots />
      <MenuItem icon={ColumnsIcon} text="차트 종류 변경" mnemonic="Y" more w={310} h="h-[72px]" />
      <div className="mx-1 -mt-px flex h-[74px] shrink-0 flex-col justify-center rounded-sm border-2 border-[#eed27a] bg-linear-to-b from-[#fdf3cc] via-[#f9df8f] via-55% to-[#fffbe0]">
        <div className="-ml-1.5 pb-1">
          <MenuItem icon={SelectDataIcon} text="데이터 선택" mnemonic="E" more w={264} h="h-[64px]" />
        </div>
      </div>
      <MenuItem icon={MoveChartIcon} text="차트 이동" mnemonic="M" more w={238} h="h-[60px]" />
      <MenuItem icon={CubeIcon} text="3차원 회전" mnemonic="R" more w={246} h="h-[76px]" off />
      <Dots />
      <MenuItem icon={GroupIcon} text="그룹" mnemonic="G" w={117} h="h-[72px]" off sub />
      <MenuItem icon={FrontIcon} text="맨 앞으로 가져오기" mnemonic="R" w={354} h="h-[68px]" off sub split />
      <MenuItem icon={BackIcon} text="맨 뒤로 보내기" mnemonic="K" w={282} h="h-[70px]" off sub split />
      <Dots />
      <MenuItem text="매크로 지정" mnemonic="N" more w={268} h="h-[73px]" />
      <Dots />
      <MenuItem icon={FormatIcon} text="차트 영역 서식" mnemonic="F" more w={307} h="h-[75px]" />
    </div>
  );
}

/* ---------- mini toolbar ---------- */

function Align({ d }: { d: string }) {
  return (
    <div className="flex h-[65px] w-[65px] items-center justify-center rounded-md border-2 border-[#dcdfe6]">
      <svg viewBox="0 0 43 34" className="h-[34px] w-[43px]"><path d={d} stroke="#777" strokeWidth="3" /></svg>
    </div>
  );
}

function MiniToolbar() {
  const box = "flex h-[68px] items-center border-[3px] border-[#d2d3d6] text-[37px] text-[#1e2024]";
  return (
    <div className="absolute top-[1103px] left-[703px] h-[157px] w-[752px] rounded-md border-[3px] border-[#a9abaf] bg-linear-to-b from-white to-[#fbfbfb] text-[#222]">
      <div className="flex pt-1 pl-[3px]">
        <div className={`${box} w-[193px] justify-between pr-3 pl-2`}>
          <div className="-mt-2 w-[138px] overflow-hidden"><Fit w={158}>맑은 고딕</Fit></div>
          <Arrow className="text-[#777]" />
        </div>
        <div className={`${box} -ml-[3px] w-[130px] justify-between pr-3 pl-2.5`}>
          <Fit w={42} className={`-mt-2 ${LATIN}`}>10</Fit>
          <Arrow className="text-[#777]" />
        </div>
        <div className="relative w-[70px] pt-[21px] pl-[14px]">
          <Fit w={34} className="text-[36px] font-bold">가</Fit>
          <svg viewBox="0 0 16 9" className="absolute top-[11px] left-9 h-[9px] w-4"><path d="M8 0l8 9H0z" fill="#4863b5" /></svg>
        </div>
        <div className="relative w-[65px] pt-[25px] pl-4">
          <Fit w={24} className="text-[26px] font-medium">가</Fit>
          <svg viewBox="0 0 16 9" className="absolute top-[11px] left-8 h-[9px] w-4"><path d="M8 9l8-9H0z" fill="#4863b5" /></svg>
        </div>
        <div className={`${box} w-[286px] justify-between pr-3 pl-2`}>
          <Fit w={154} className="-mt-2">차트 영역</Fit>
          <Arrow className="text-[#777]" />
        </div>
      </div>
      <div className="flex h-[83px] items-center pl-5">
        <Fit w={34} className="text-[36px] font-bold">가</Fit>
        <Fit w={36} className="ml-7 text-[36px] italic">가</Fit>
        <div className="ml-[17px] flex gap-[1px]">
          <Align d="M0 2h43M0 8h31M0 14h43M0 20h31M0 26h43M0 32h31" />
          <Align d="M0 2h43M6 8h31M0 14h43M6 20h31M0 26h43M6 32h31" />
          <Align d="M0 2h43M12 8h31M0 14h43M12 20h31M0 26h43M12 32h31" />
        </div>
        <div className="ml-[10px] flex w-12 flex-col items-center">
          <Fit w={36} className="-mt-1 text-[36px]">가</Fit>
          <div className="h-3 w-12 bg-[#f0341c]" />
        </div>
        <Arrow className="ml-[18px] text-[#777]" />
        <svg viewBox="0 0 48 50" className="ml-5 h-[50px] w-12 shrink-0">
          <path d="M33 13q14 1 13 21-5 2-6-4t-7-10z" fill="#3f65b5" />
          <path d="M5 24 18 10l4-8 4 8 13 14-16 14z" fill="#eaf0fa" stroke="#5c6d8e" strokeWidth="2.500" />
          <path d="M22 3v18" stroke="#5c6d8e" strokeWidth="3" />
          <path d="M0 38h48v12H0z" fill="#c0645a" />
        </svg>
        <Arrow className="ml-[18px] text-[#777]" />
        <svg viewBox="0 0 48 50" className="ml-5 h-[50px] w-12 shrink-0">
          <path d="M26 7H2v26h28" fill="none" stroke="#444" strokeWidth="3" />
          <path d="M17 33 20 22 35 4l8 6-15 18z" fill="#e5d58a" stroke="#7a6a3c" strokeWidth="2" />
          <path d="M34 6l4-4q4-1 6 4l-2 6z" fill="#cf6d5b" />
          <path d="M0 38h48v12H0z" fill="#5b87c9" />
        </svg>
        <Arrow className="ml-[18px] text-[#777]" />
        <svg viewBox="0 0 50 44" className="ml-[22px] h-[44px] w-[50px] shrink-0">
          <path d="M1 22q3-6 12-6l14-5L40 2q7-3 8 2l-6 11-2 12q-6 6-10 12l-6 5-8-7z" fill="#b5b5b5" />
          <path d="M3 22q3-4 11-4l14-5 4 6-14 16z" fill="#d0d0d0" />
        </svg>
      </div>
    </div>
  );
}

export default function App() {
  return (
    <div className={`relative flex h-[1492px] w-[2680px] flex-col overflow-hidden bg-white ${KR}`}>
      <TabStrip />
      <Ribbon />
      <FormulaBar />
      <Sheet />
      <SheetTabs />
      <MiniToolbar />
      <ContextMenu />
      <div className="absolute top-[430px] left-[986px] h-[83px] w-[83px] rounded-full bg-[#f0604f]/30" />
      <svg viewBox="0 0 60 96" className="absolute top-[472px] left-[1025px] h-24 w-[60px]">
        <path d="M3 3v68l17-15 15 32q4 4 9-1 2-2 1-5L30 55h26z" fill="#fff" stroke="#2a2320" strokeWidth="3" />
      </svg>
      <div className="absolute top-[465px] left-[700px] h-[73px] w-[621px] border-[5px] border-[#ee4023]" />
      <div className="pointer-events-none absolute inset-0 bg-[linear-gradient(to_bottom,rgba(0,0,0,.1)_0px,rgba(0,0,0,.03)_70px,rgba(0,0,0,0)_130px,rgba(0,0,0,0)_880px,rgba(0,0,0,.05)_1000px,rgba(0,0,0,.11)_1100px,rgba(0,0,0,.17)_1210px,rgba(0,0,0,.21)_1300px,rgba(0,0,0,.26)_1430px,rgba(0,0,0,.28)_1492px)]" />
    </div>
  );
}
